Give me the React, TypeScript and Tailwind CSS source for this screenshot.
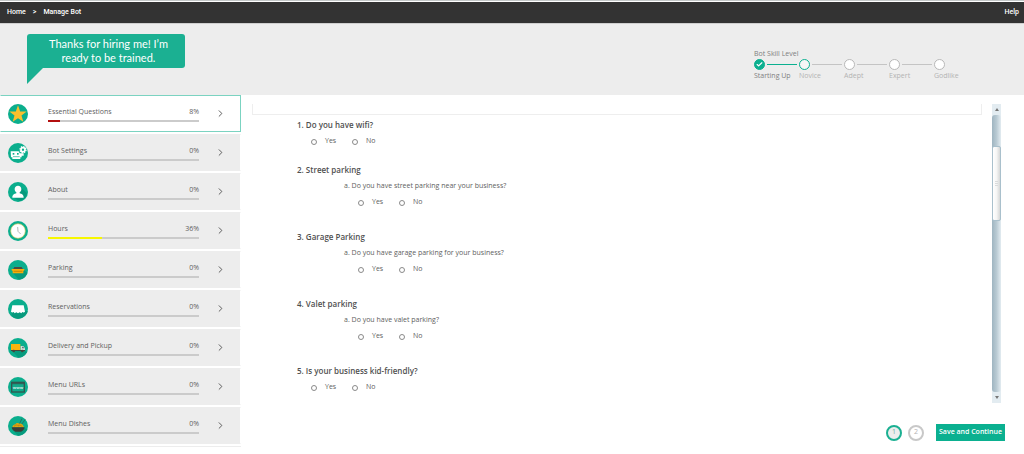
import React, { useState } from 'react';
import { Check, ChevronRight } from 'lucide-react';

interface Section {
  name: string;
  percent: number;
  color?: string;
  icon: React.ReactNode;
}

interface Question {
  title: string;
  sub?: string;
}

const sections: Section[] = [
  {
    name: 'Essential Questions',
    percent: 8,
    color: '#b30f0f',
    icon: <path d="M30 4l6.500 18.500H56L40.500 34.500l5.500 19L30 42.500 14 53.500l5.500-19L4 22.500h19.500z" fill="#fbc02d" />,
  },
  {
    name: 'Bot Settings',
    percent: 0,
    icon: (
      <>
        <path d="M8 25h24l3 6h12v7h-6v5h-4v5H13v-5H9z" fill="#fff" />
        <circle cx="45" cy="20" r="9" fill="none" stroke="#fff" strokeWidth="4" strokeDasharray="4 3" />
        <circle cx="45" cy="20" r="6" fill="none" stroke="#fff" strokeWidth="5" />
        <rect x="14" y="30" width="5" height="5" fill="#0bae8d" />
        <rect x="27" y="30" width="5" height="5" fill="#0bae8d" />
        <path d="M15 41h20" stroke="#0bae8d" strokeWidth="2" />
      </>
    ),
  },
  {
    name: 'About',
    percent: 0,
    icon: (
      <>
        <path d="M38 16l19 18c-2 12-10 21-22 23L14 46z" fill="#079a7d" />
        <path d="M30 11c6 0 10 4 10 10 0 5-2 8-5 10v3c6 2 12 4 12 13H13c0-9 6-11 12-13v-3c-3-2-5-5-5-10 0-6 4-10 10-10z" fill="#fff" />
      </>
    ),
  },
  {
    name: 'Hours',
    percent: 36,
    color: '#f7f700',
    icon: (
      <>
        <circle cx="30" cy="30" r="22" fill="#fff" stroke="#c9c553" strokeWidth="2" />
        <path d="M29 18l1 13 8 8" fill="none" stroke="#8b9692" strokeWidth="2" />
      </>
    ),
  },
  {
    name: 'Parking',
    percent: 0,
    icon: (
      <>
        <path d="M48 30l10 8c-4 12-13 20-25 21L15 40z" fill="#079a7d" />
        <path d="M19 21h22l5 8H14z" fill="#4c4b42" />
        <path d="M11 27h38v4l-3 2v7H14v-7l-3-2z" fill="#f6ad0a" />
        <path d="M17 34h26" stroke="#a97908" strokeWidth="2" />
      </>
    ),
  },
  {
    name: 'Reservations',
    percent: 0,
    icon: (
      <>
        <path d="M48 36h11c-3 12-15 23-29 23-8 0-14-3-19-8V38z" fill="#079a7d" />
        <path d="M13 19h34l4 19c-2 3-6 3-8 1l-3 4-5-3-5 3-5-3-5 3-3-4c-2 2-6 2-8-1z" fill="#fff" />
      </>
    ),
  },
  {
    name: 'Delivery and Pickup',
    percent: 0,
    icon: (
      <>
        <path d="M50 38l7 4c-5 10-14 17-25 17L13 40z" fill="#079a7d" />
        <path d="M9 18h28v18H9z" fill="#fbb40b" />
        <path d="M38 24h8l5 7v7H38z" fill="#d5dcda" />
        <path d="M42 26h4l3 5h-7z" fill="#5f7a78" />
        <path d="M9 36h42v3H9z" fill="#46453d" />
        <circle cx="17" cy="39" r="4" fill="#46453d" />
        <circle cx="43" cy="39" r="4" fill="#46453d" />
      </>
    ),
  },
  {
    name: 'Menu URLs',
    percent: 0,
    icon: (
      <>
        <rect x="11" y="16" width="38" height="29" fill="#12a98a" stroke="#32564f" strokeWidth="4" />
        <path d="M10 20h40" stroke="#32564f" strokeWidth="3" />
        <text x="30" y="36" textAnchor="middle" fontSize="12" fontWeight="700" fill="#d8efe9">www</text>
      </>
    ),
  },
  {
    name: 'Menu Dishes',
    percent: 0,
    icon: (
      <>
        <path d="M48 36l10 4c-5 11-15 19-27 19l-12-12z" fill="#079a7d" />
        <path d="M34 24l8-16M40 26l12-16" stroke="#36524a" strokeWidth="2" />
        <path d="M13 34c1-7 6-8 9-9 3-5 9-4 12-2 6-1 12 3 14 11z" fill="#e0a312" />
        <path d="M18 31c5-5 9-5 14-1M30 28c5-1 9 0 13 4" fill="none" stroke="#a97a10" strokeWidth="2" />
        <path d="M11 34h39c-1 7-6 11-11 13H22c-6-2-10-6-11-13z" fill="#3d3c36" />
      </>
    ),
  },
];

const questions: Question[] = [
  { title: 'Do you have wifi?' },
  { title: 'Street parking', sub: 'Do you have street parking near your business?' },
  { title: 'Garage Parking', sub: 'Do you have garage parking for your business?' },
  { title: 'Valet parking', sub: 'Do you have valet parking?' },
  { title: 'Is your business kid-friendly?' },
];

const levels = ['Starting Up', 'Novice', 'Adept', 'Expert', 'Godlike'];

function TopBar() {
  return (
    <nav className="mt-px flex h-[21px] items-center bg-[#333333] pl-[7px] pr-[5px] font-['Roboto',sans-serif] text-[7px] font-medium text-white">
      <a href="#home">Home</a>
      <span className="mx-[7px]">&gt;</span>
      <a href="#manage">Manage Bot</a>
      <a href="#help" className="ml-auto">Help</a>
    </nav>
  );
}

function SpeechBubble() {
  return (
    <div className="ml-[27px] mt-[10px]">
      <div className="flex h-[34px] w-[158px] items-center justify-center rounded-[3px] rounded-bl-none bg-[#1bb092] pl-[5px] text-center font-['Lato',sans-serif] text-[11px] leading-[14px] text-white">
        <p>
          Thanks for hiring me! I’m
          <br />
          ready to be trained.
        </p>
      </div>
      <div className="h-4 w-4 bg-[#1bb092] [clip-path:polygon(0_0,100%_0,0_100%)]" />
    </div>
  );
}

function SkillLevel() {
  return (
    <div className="mr-[45px] mt-6 text-[7px] leading-[11px]">
      <p className="text-[#808080]">Bot Skill Level</p>
      <ol className="flex">
        {levels.map((level, i) => (
          <li key={level} className="w-[45px]">
            <div className="flex h-[11px] items-center">
              <span
                className={`flex size-[11px] shrink-0 items-center justify-center rounded-full border ${
                  i === 0 ? 'border-[#0bb090] bg-[#0bb090]' : i === 1 ? 'border-[#0bb090] bg-[#f6f6f6]' : 'border-[#b8b8b8] bg-white'
                }`}
              >
                {i === 0 && <Check size={7} strokeWidth={4} className="text-white" />}
              </span>
              {i < levels.length - 1 && (
                <span className={`mx-[2px] h-px flex-1 ${i === 0 ? 'bg-[#0bb090]' : 'bg-[#c4c4c4]'}`} />
              )}
            </div>
            <span className={`whitespace-nowrap ${i === 0 ? 'text-[#808080]' : 'text-[#b3b3b3]'}`}>{level}</span>
          </li>
        ))}
      </ol>
    </div>
  );
}

function SectionItem({ section, active, onSelect }: { section: Section; active: boolean; onSelect: () => void }) {
  return (
    <li>
      <button
        type="button"
        onClick={onSelect}
        className={`flex h-[37px] w-full items-center border pl-[7px] text-left ${
          active ? 'border-[#7bd3c1] border-l-transparent bg-white' : 'border-[#ededed] border-r-white bg-[#ededed]'
        }`}
      >
        <svg viewBox="0 0 60 60" className="size-5 shrink-0" aria-hidden="true">
          <circle cx="30" cy="30" r="30" fill="#0bae8d" />
          {section.icon}
        </svg>
        <span className="ml-5 mr-4 block flex-1">
          <span className="flex h-[13px] items-center justify-between text-[7px] text-[#606060]">
            <span>{section.name}</span>
            <span>{section.percent}%</span>
          </span>
          <span className="mt-px block h-[2px] bg-[#cbcbcb]">
            <span className="block h-full" style={{ width: `${section.percent}%`, background: section.color }} />
          </span>
        </span>
        <ChevronRight size={11} strokeWidth={2} className="mr-[14px] shrink-0 text-[#505050]" />
      </button>
    </li>
  );
}

function YesNo({ name }: { name: string }) {
  return (
    <div className="flex h-[17px] items-center">
      {['Yes', 'No'].map((option) => (
        <label key={option} className="flex w-[41px] items-center gap-2 text-[7px] text-[#606060]">
          <input
            type="radio"
            name={name}
            value={option}
            className="size-[6px] shrink-0 appearance-none rounded-full border border-[#8a8a8a] bg-white checked:bg-[#0bb090]"
          />
          {option}
        </label>
      ))}
    </div>
  );
}

function Questions() {
  return (
    <ol className="pb-[7px] pl-[45px] pt-[2px]">
      {questions.map((q, i) => (
        <li key={q.title} className={i === questions.length - 1 ? '' : q.sub ? 'mb-[18px]' : 'mb-3'}>
          <h2 className="text-[8px] font-semibold leading-4 text-[#505050]">
            {i + 1}. {q.title}
          </h2>
          {q.sub && <p className="pl-[47px] text-[7px] leading-4 text-[#606060]">a. {q.sub}</p>}
          <div className={q.sub ? 'pl-[61px]' : 'pl-[14px]'}>
            <YesNo name={`question-${i + 1}`} />
          </div>
        </li>
      ))}
    </ol>
  );
}

function ScrollBar() {
  return (
    <div className="flex w-[9px] shrink-0 flex-col bg-[#e3ecf1]">
      <span className="flex h-[11px] items-center justify-center text-[#777777]">
        <svg viewBox="0 0 4 3" className="h-[3px] w-1"><path d="M2 0l2 3H0z" fill="currentColor" /></svg>
      </span>
      <div className="flex-1 rounded-[3px] bg-linear-to-r from-[#9fb5c1] via-[#b9cad3] to-[#e3ecf1] pt-[31px]">
        <div className="flex h-[75px] flex-col items-center justify-center gap-px rounded-[2px] border border-[#a9c0cc] bg-linear-to-r from-white via-[#f6f6f5] to-[#d6d8d8]">
          <span className="h-px w-[3px] bg-[#d9dbdc]" />
          <span className="h-px w-[3px] bg-[#d9dbdc]" />
          <span className="h-px w-[3px] bg-[#d9dbdc]" />
        </div>
      </div>
      <span className="flex h-[11px] items-center justify-center text-[#777777]">
        <svg viewBox="0 0 4 3" className="h-[3px] w-1"><path d="M0 0h4L2 3z" fill="currentColor" /></svg>
      </span>
    </div>
  );
}

export default function App() {
  const [active, setActive] = useState(0);
  const [page, setPage] = useState(1);

  return (
    <div className="min-h-screen bg-white font-['Open_Sans','Noto_Sans',sans-serif]">
      <div className="border-t border-[#c4c8c8]">
        <TopBar />
      </div>
      <header className="flex h-[72px] items-start justify-between border-t border-[#cfcfcf] bg-[#ededed]">
        <SpeechBubble />
        <SkillLevel />
      </header>
      <div className="flex items-start">
        <aside className="w-[241px] shrink-0">
          <ul className="flex flex-col gap-[2px] border-b border-[#ededed] pb-[2px]">
            {sections.map((section, i) => (
              <SectionItem key={section.name} section={section} active={i === active} onSelect={() => setActive(i)} />
            ))}
          </ul>
        </aside>
        <main className="min-w-0 flex-1 pl-[11px] pr-[23px] pt-[9px]">
          <div className="flex gap-[10px]">
            <div className="flex-1">
              <div className="h-[11px] border-x border-b border-[#eeeeee]" />
              <Questions />
            </div>
            <ScrollBar />
          </div>
          <div className="-mr-1 mt-[21px] flex items-center justify-end gap-[6px]">
            {[1, 2].map((n) => (
              <button
                key={n}
                type="button"
                onClick={() => setPage(n)}
                className={`flex size-4 items-center justify-center rounded-full border-2 text-[7px] ${
                  n === page ? 'border-[#1bb092] bg-[#ededed] text-[#6fae9f]' : 'border-[#c8c8c8] bg-white text-[#b3b3b3]'
                }`}
              >
                {n}
              </button>
            ))}
            <button type="button" className="ml-[6px] h-[17px] w-[69px] whitespace-nowrap bg-[#0bb090] text-[7px] font-semibold text-white">
              Save and Continue
            </button>
          </div>
        </main>
      </div>
    </div>
  );
}
